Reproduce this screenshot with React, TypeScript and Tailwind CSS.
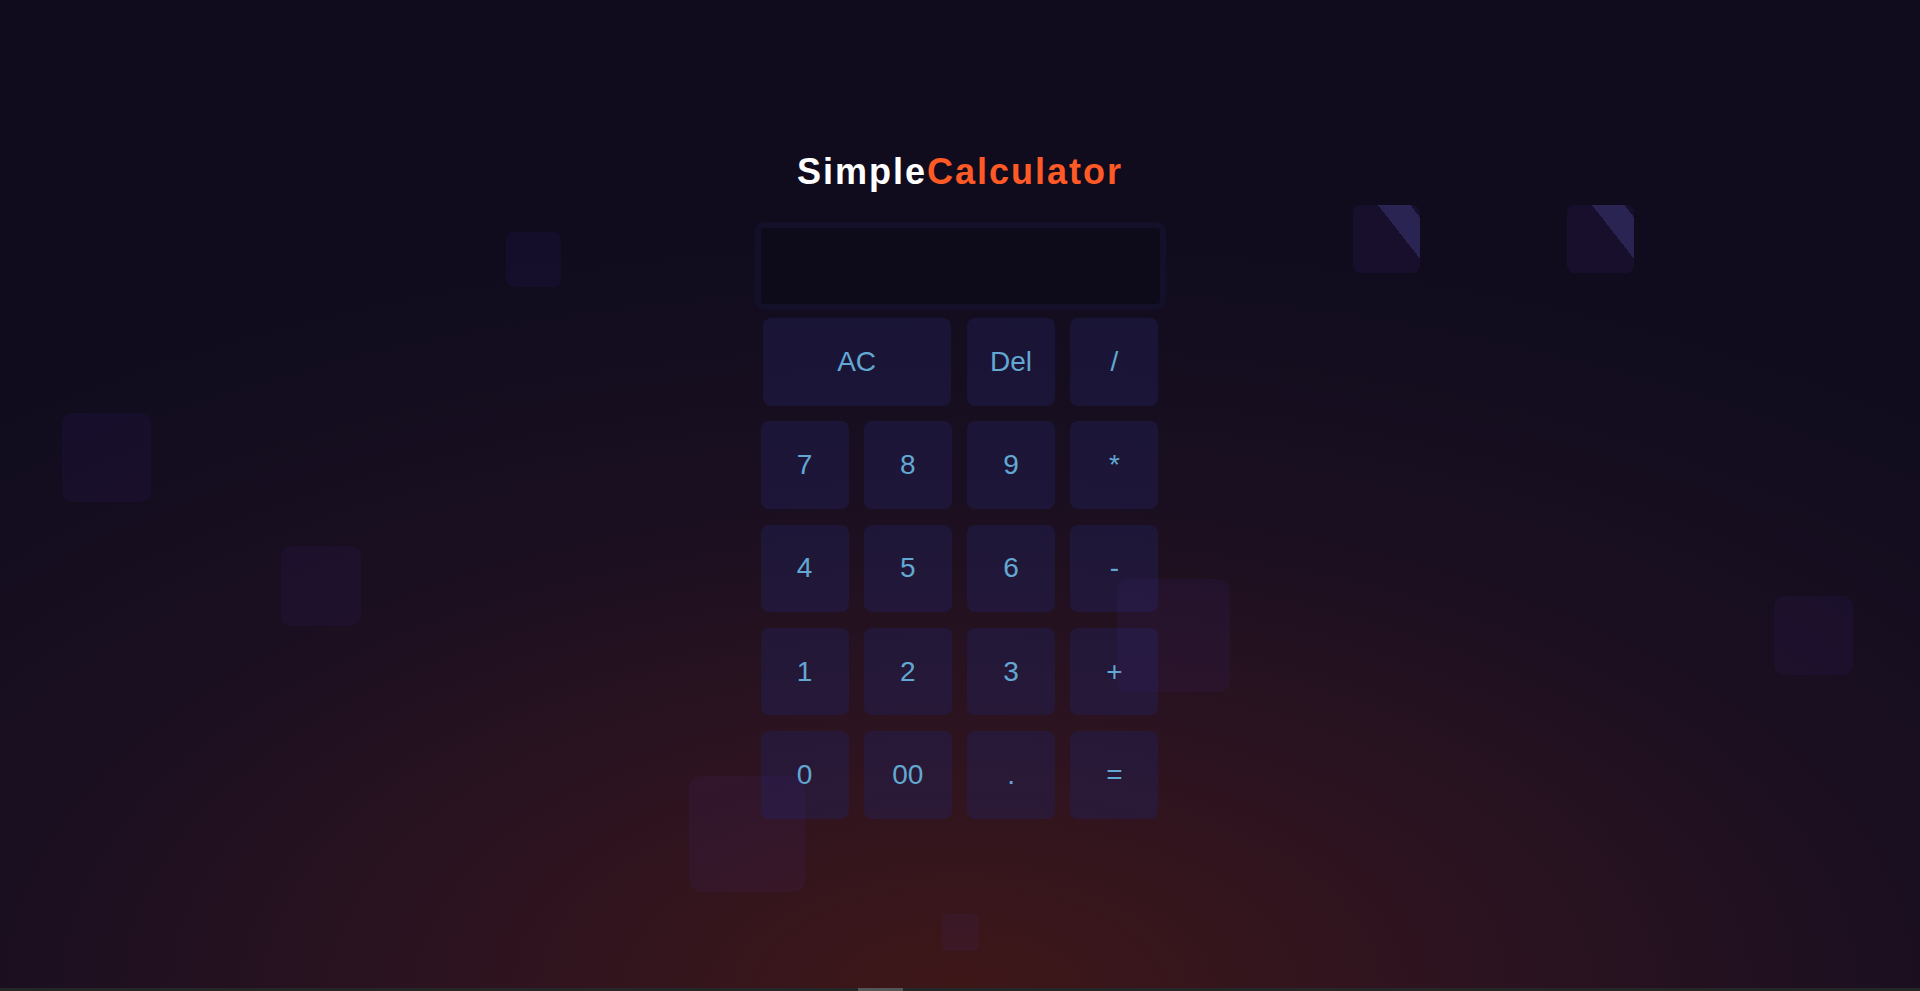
import React from "react"

const KEYS = ["7", "8", "9", "*", "4", "5", "6", "-", "1", "2", "3", "+", "0", "00", ".", "="]

// floating background squares (decorative)
const SQUARES = [
  { cls: "left-[506px] top-[232px] w-[55px] h-[55px] rounded-[8px]" },
  { cls: "left-[62px] top-[413px] w-[89px] h-[89px] rounded-[10px]" },
  { cls: "left-[281px] top-[546px] w-[80px] h-[80px] rounded-[10px]" },
  { cls: "left-[1117px] top-[579px] w-[113px] h-[113px] rounded-[12px]" },
  { cls: "left-[1774px] top-[596px] w-[79px] h-[79px] rounded-[10px]" },
  { cls: "left-[689px] top-[776px] w-[116px] h-[116px] rounded-[12px]" },
  { cls: "left-[942px] top-[914px] w-[37px] h-[37px] rounded-[5px]" },
]

function Key({ label, wide }: { label: string; wide?: boolean }) {
  return (
    <button
      className={`${wide ? "col-span-2 ml-[2px] mr-[1px]" : ""} h-[87.5px] rounded-lg bg-[rgba(34,31,86,0.44)] text-[28px] text-[#62a8d2] flex items-center justify-center`}
    >
      {label}
    </button>
  )
}

export default function App() {
  return (
    <div
      className="relative h-screen w-full overflow-hidden flex flex-col bg-[#100c1e] bg-[radial-gradient(ellipse_1500px_760px_at_50%_100%,#3e1718_0%,#2c1320_35%,#1a0f20_65%,#100c1e_100%)]"
      style={{ fontFamily: '"Liberation Sans", Arial, sans-serif' }}
    >
      <div className="flex-1 flex flex-col items-center pt-[152px]">
        <h1 className="text-4xl leading-[40px] font-bold tracking-[2px]">
          <span className="text-white">Simple</span>
          <span className="text-[#ff5a26]">Calculator</span>
        </h1>

        <div className="w-[411px] mt-[30px]">
          {/* Display */}
          <div className="h-[88px] rounded-[10px] border-[6px] border-[#14102a] bg-[#0d0a19]" />

          {/* Keys */}
          <div className="mt-[8px] px-[6px] grid grid-cols-[repeat(4,88px)] gap-x-[15.3px] gap-y-[15.8px]">
            <Key label="AC" wide />
            <Key label="Del" />
            <Key label="/" />
            {KEYS.map(k => (
              <Key key={k} label={k} />
            ))}
          </div>
        </div>
      </div>

      {SQUARES.map((s, i) => (
        <div key={i} className={`absolute pointer-events-none bg-[rgba(76,52,172,0.085)] ${s.cls}`} />
      ))}
      <div className="absolute left-[1353px] top-[205px] w-[67px] h-[68px] rounded-[8px] pointer-events-none bg-[linear-gradient(52deg,#170f2c_65%,#2a2452_65%,#2a2452_92%,#170f2c_92%)]" />
      <div className="absolute left-[1567px] top-[205px] w-[67px] h-[68px] rounded-[8px] pointer-events-none bg-[linear-gradient(52deg,#170f2c_65%,#2a2452_65%,#2a2452_92%,#170f2c_92%)]" />

      {/* scrollbar sliver */}
      <div className="h-[3px] bg-[#262626] flex">
        <div className="ml-[858px] w-[45px] bg-[#555]" />
      </div>
    </div>
  )
}
